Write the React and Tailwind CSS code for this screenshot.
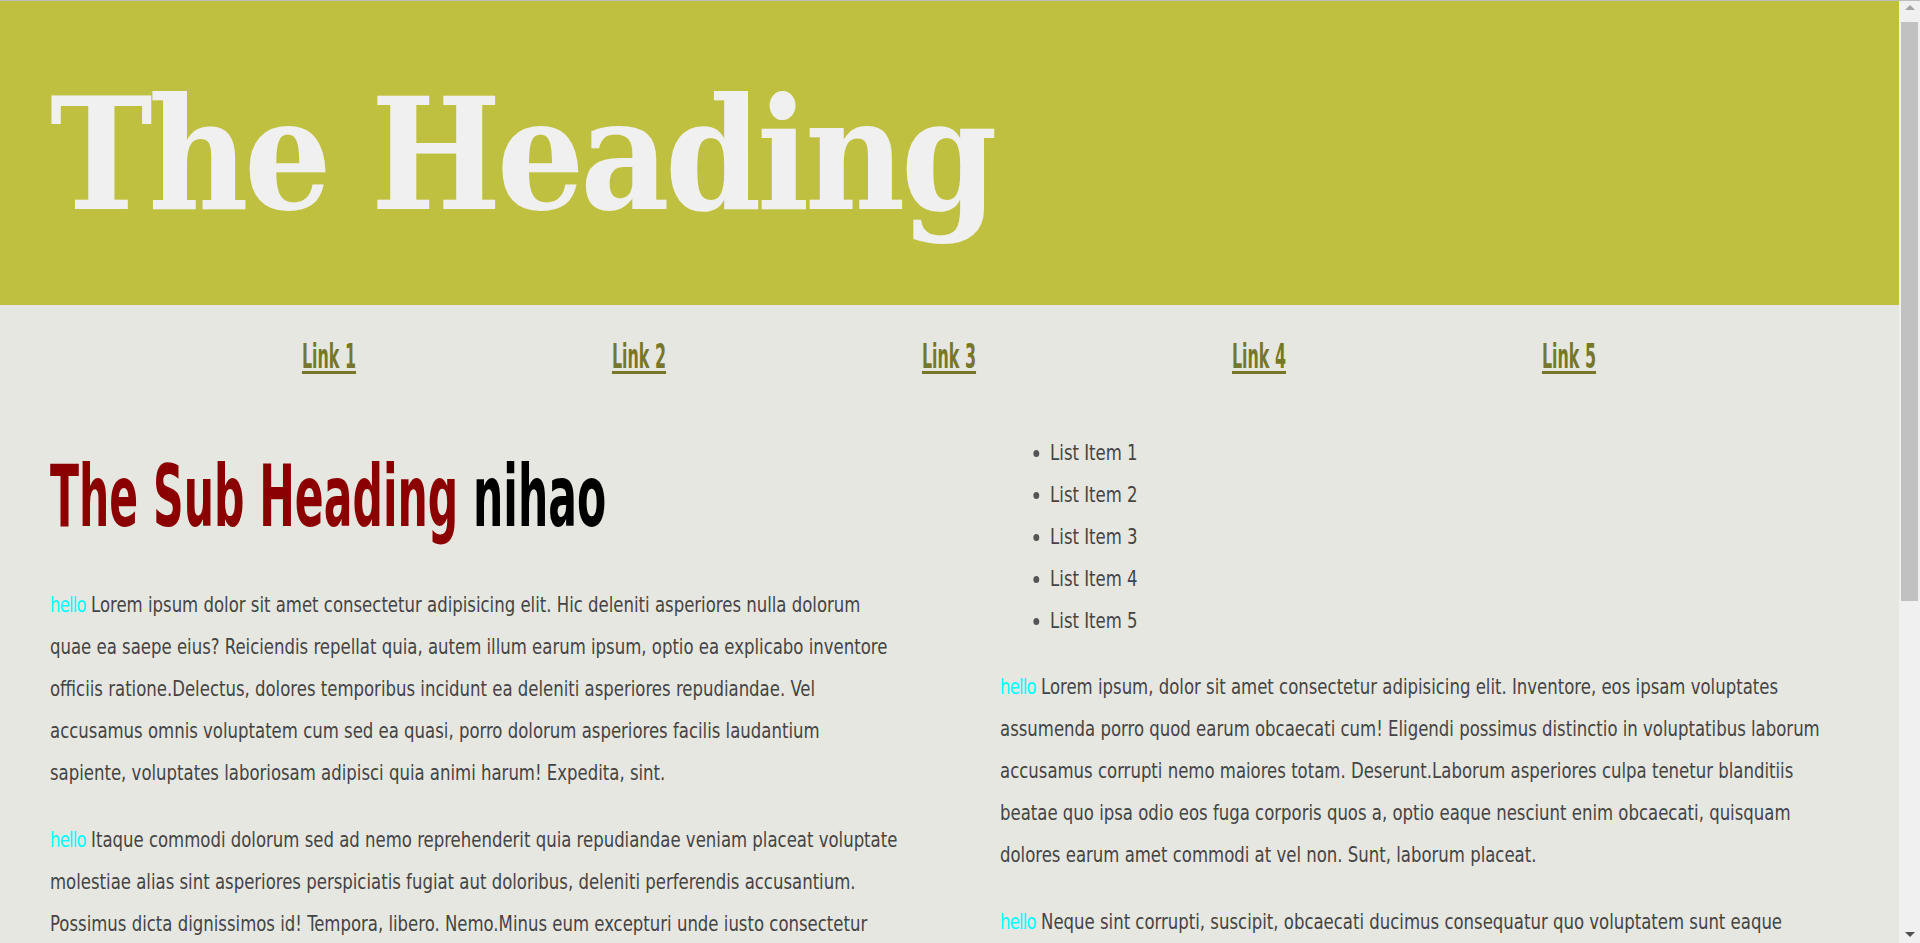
import React from 'react';

const BODY = '"DejaVu Sans Condensed", "DejaVu Sans", sans-serif';

const LINKS = ['Link 1', 'Link 2', 'Link 3', 'Link 4', 'Link 5'];
const ITEMS = ['List Item 1', 'List Item 2', 'List Item 3', 'List Item 4', 'List Item 5'];

const LEFT = [
  'Lorem ipsum dolor sit amet consectetur adipisicing elit. Hic deleniti asperiores nulla dolorum quae ea saepe eius? Reiciendis repellat quia, autem illum earum ipsum, optio ea explicabo inventore officiis ratione.Delectus, dolores temporibus incidunt ea deleniti asperiores repudiandae. Vel accusamus omnis voluptatem cum sed ea quasi, porro dolorum asperiores facilis laudantium sapiente, voluptates laboriosam adipisci quia animi harum! Expedita, sint.',
  'Itaque commodi dolorum sed ad nemo reprehenderit quia repudiandae veniam placeat voluptate molestiae alias sint asperiores perspiciatis fugiat aut doloribus, deleniti perferendis accusantium. Possimus dicta dignissimos id! Tempora, libero. Nemo.Minus eum excepturi unde iusto consectetur quos, nostrum voluptas beatae ratione quam sequi aspernatur cumque dolores.',
];

const RIGHT = [
  'Lorem ipsum, dolor sit amet consectetur adipisicing elit. Inventore, eos ipsam voluptates assumenda porro quod earum obcaecati cum! Eligendi possimus distinctio in voluptatibus laborum accusamus corrupti nemo maiores totam. Deserunt.Laborum asperiores culpa tenetur blanditiis beatae quo ipsa odio eos fuga corporis quos a, optio eaque nesciunt enim obcaecati, quisquam dolores earum amet commodi at vel non. Sunt, laborum placeat.',
  'Neque sint corrupti, suscipit, obcaecati ducimus consequatur quo voluptatem sunt eaque laudantium officia earum nam, illo reiciendis fugiat. Quidem, tempora voluptatum.',
];

function Para({ text }) {
  return (
    <p className="mb-[25px] text-[22px] leading-[42px] text-[#444]">
      <span className="tracking-[-1px] text-[#00ffff]">hello</span> {text}
    </p>
  );
}

function Scrollbar() {
  return (
    <div className="flex w-[21px] shrink-0 flex-col items-center bg-[#f0f0f0]">
      <div className="mt-[4px] h-0 w-0 border-x-[5px] border-b-[5px] border-x-transparent border-b-[#a3a3a3]" />
      <div className="mt-[12px] h-[579px] w-[17px] bg-[#c1c1c1]" />
      <div className="flex-1" />
      <div className="mb-[6px] h-0 w-0 border-x-[5px] border-t-[5px] border-x-transparent border-t-[#505050]" />
    </div>
  );
}

export default function App() {
  return (
    <div className="flex h-screen overflow-hidden border-t border-[#bcbcbc] bg-[#e7e7e1]">
      <div className="min-w-0 flex-1 overflow-hidden" style={{ fontFamily: BODY }}>
        {/* header */}
        <header className="h-[304px] bg-[#c0c040] px-[50px] pt-[76px]">
          <h1
            className="origin-left scale-x-[0.89] whitespace-nowrap text-[155px] font-bold leading-[155px] tracking-[-5px] text-[#f0f0f0]"
            style={{ fontFamily: '"DejaVu Serif", serif' }}
          >
            The Heading
          </h1>
        </header>

        {/* nav */}
        <nav className="mx-auto grid w-[1550px] grid-cols-5 pt-[30px] text-center">
          {LINKS.map((l) => (
            <div key={l} className="h-[42px]">
              <a
                href="#"
                className="inline-block scale-x-[0.52] whitespace-nowrap text-[34px] font-bold leading-[42px] text-[#77772a] underline decoration-[3px] underline-offset-[3px]"
              >
                {l}
              </a>
            </div>
          ))}
        </nav>

        {/* content */}
        <main className="grid grid-cols-[minmax(0,1fr)_minmax(0,1fr)] gap-[100px] px-[50px] pt-[55px]">
          <section className="min-w-0">
            <h2 className="mt-[21px] mb-[45px] origin-left scale-x-[0.55] whitespace-nowrap text-[86px] font-bold leading-[86px] text-[#8b0000]">
              The Sub Heading <span className="text-black">nihao</span>
            </h2>
            <div className="w-[1016px] origin-top-left scale-x-[0.835]">
              {LEFT.map((t, i) => (
                <Para key={i} text={t} />
              ))}
            </div>
          </section>
          <section className="min-w-0">
            <div className="w-[1016px] origin-top-left scale-x-[0.835]">
              <ul className="mb-[24px] list-disc pl-[60px] text-[22px] leading-[42px] text-[#444] marker:text-[#555]">
                {ITEMS.map((it) => (
                  <li key={it}>{it}</li>
                ))}
              </ul>
              {RIGHT.map((t, i) => (
                <Para key={i} text={t} />
              ))}
            </div>
          </section>
        </main>
      </div>
      <Scrollbar />
    </div>
  );
}
